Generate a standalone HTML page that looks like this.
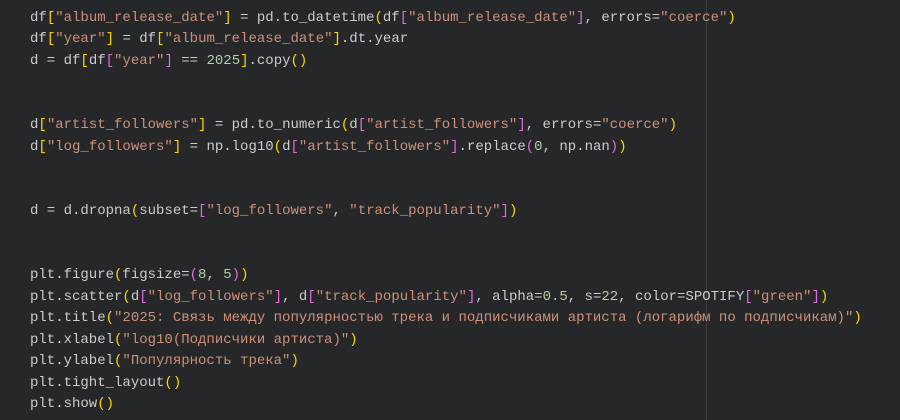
<!DOCTYPE html>
<html><head><meta charset="utf-8"><style>
body{margin:0;width:900px;height:420px;background:#262729;overflow:hidden;position:relative}
pre{margin:0;position:absolute;left:30px;top:8px;font-family:"Liberation Mono","DejaVu Sans Mono",monospace;font-size:14px;line-height:21.45px;color:#cccccc}
.s{color:#ce9178}.y{color:#ffd700}.p{color:#da70d6}.b{color:#179fff}.n{color:#b5cea8}
.v{position:absolute;left:706px;top:0;width:1px;height:420px;background:#3c3d40}
</style></head><body>
<div class="v"></div>
<pre>df<span class="y">[</span><span class="s">"album_release_date"</span><span class="y">]</span> = pd.to_datetime<span class="y">(</span>df<span class="p">[</span><span class="s">"album_release_date"</span><span class="p">]</span>, errors=<span class="s">"coerce"</span><span class="y">)</span>
df<span class="y">[</span><span class="s">"year"</span><span class="y">]</span> = df<span class="y">[</span><span class="s">"album_release_date"</span><span class="y">]</span>.dt.year
d = df<span class="y">[</span>df<span class="p">[</span><span class="s">"year"</span><span class="p">]</span> == <span class="n">2025</span><span class="y">]</span>.copy<span class="y">()</span>


d<span class="y">[</span><span class="s">"artist_followers"</span><span class="y">]</span> = pd.to_numeric<span class="y">(</span>d<span class="p">[</span><span class="s">"artist_followers"</span><span class="p">]</span>, errors=<span class="s">"coerce"</span><span class="y">)</span>
d<span class="y">[</span><span class="s">"log_followers"</span><span class="y">]</span> = np.log10<span class="y">(</span>d<span class="p">[</span><span class="s">"artist_followers"</span><span class="p">]</span>.replace<span class="p">(</span><span class="n">0</span>, np.nan<span class="p">)</span><span class="y">)</span>


d = d.dropna<span class="y">(</span>subset=<span class="p">[</span><span class="s">"log_followers"</span>, <span class="s">"track_popularity"</span><span class="p">]</span><span class="y">)</span>


plt.figure<span class="y">(</span>figsize=<span class="p">(</span><span class="n">8</span>, <span class="n">5</span><span class="p">)</span><span class="y">)</span>
plt.scatter<span class="y">(</span>d<span class="p">[</span><span class="s">"log_followers"</span><span class="p">]</span>, d<span class="p">[</span><span class="s">"track_popularity"</span><span class="p">]</span>, alpha=<span class="n">0.5</span>, s=<span class="n">22</span>, color=SPOTIFY<span class="p">[</span><span class="s">"green"</span><span class="p">]</span><span class="y">)</span>
plt.title<span class="y">(</span><span class="s">"2025: Связь между популярностью трека и подписчиками артиста (логарифм по подписчикам)"</span><span class="y">)</span>
plt.xlabel<span class="y">(</span><span class="s">"log10(Подписчики артиста)"</span><span class="y">)</span>
plt.ylabel<span class="y">(</span><span class="s">"Популярность трека"</span><span class="y">)</span>
plt.tight_layout<span class="y">()</span>
plt.show<span class="y">()</span></pre>
</body></html>
